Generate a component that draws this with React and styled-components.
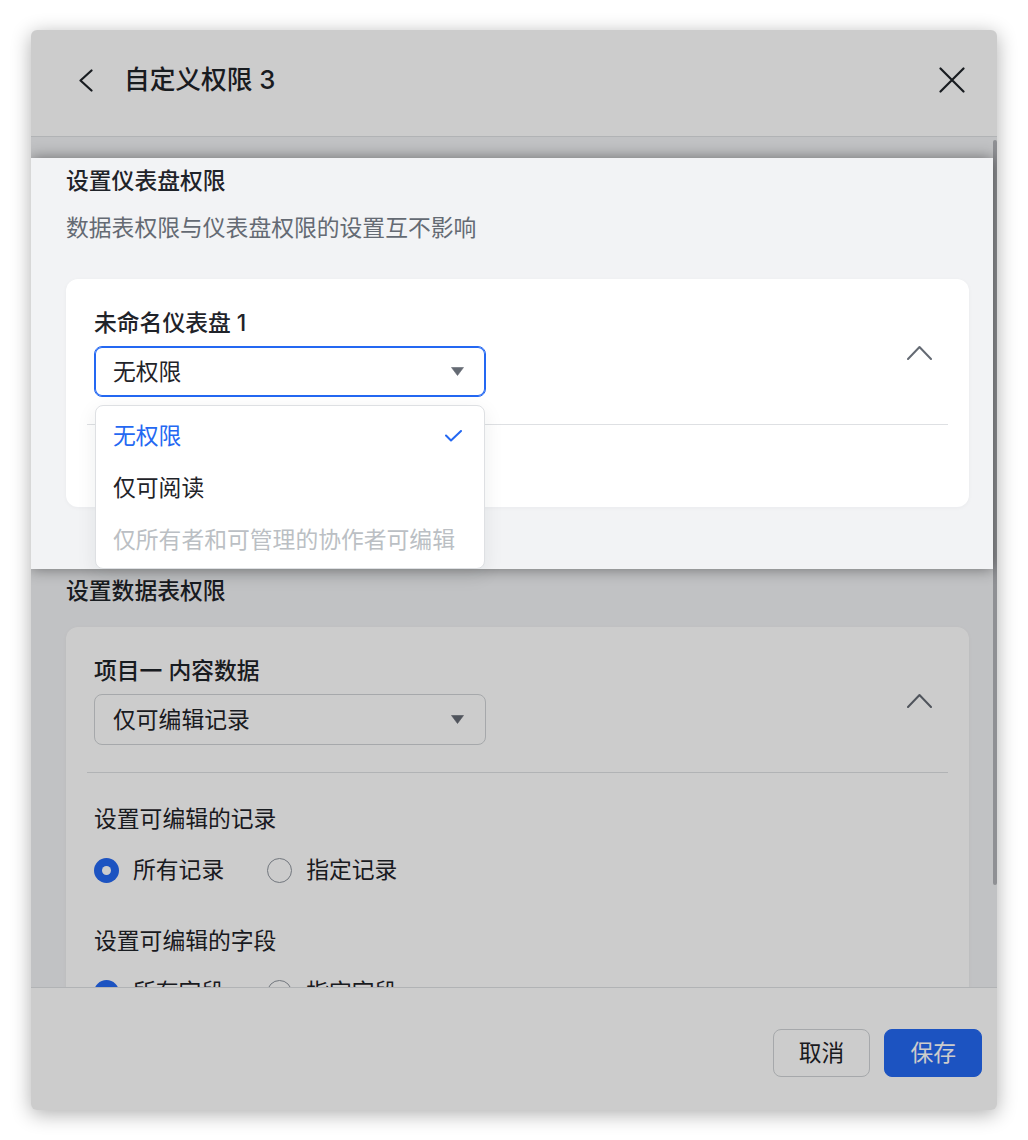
import React from "react";
import styled, { createGlobalStyle } from "styled-components";

const BLUE = "#2468f2";
const TEXT = "#1f2329";
const GRAY = "#646a73";
const LINE = "#dee0e3";

const GlobalStyle = createGlobalStyle`
  html, body { margin: 0; padding: 0; background: #ffffff; }
  body {
    font-family: "Inter", "Noto Sans CJK SC", sans-serif;
    color: ${TEXT};
    -webkit-font-smoothing: antialiased;
  }
  * { box-sizing: border-box; }
`;

const Page = styled.div`
  padding: 30px 0 30px 31px;
  min-height: 1140px;
`;

const Modal = styled.div`
  position: relative;
  width: 966px;
  height: 1080px;
  display: flex;
  flex-direction: column;
  background: #ffffff;
  border-radius: 6px;
  overflow: hidden;
  box-shadow: 0 4px 20px rgba(0, 0, 0, 0.32);
`;

const Mask = styled.div`
  position: absolute;
  inset: 0;
  background: rgba(0, 0, 0, 0.2);
  z-index: 10;
  pointer-events: none;
`;

const Header = styled.div`
  flex: none;
  height: 107px;
  display: flex;
  align-items: center;
  padding: 0 32px 6px 47px;
  border-bottom: 1px solid ${LINE};
`;

const IconButton = styled.button`
  display: flex;
  align-items: center;
  justify-content: center;
  padding: 0;
  border: none;
  background: transparent;
  cursor: pointer;
`;

const Title = styled.h1`
  flex: 1;
  margin: 0 0 0 31px;
  font-size: 25.7px;
  line-height: 36px;
  font-weight: 500;
  color: ${TEXT};
`;

const Body = styled.div`
  position: relative;
  flex: 1;
  overflow: hidden;
  background: #f2f3f5;
  padding: 21px 4px 0 0;
`;

const ScrollThumb = styled.div`
  position: absolute;
  top: 3px;
  right: 0;
  width: 4px;
  height: 745px;
  border-radius: 2px;
  background: #b3b5b9;
`;

const Section = styled.section`
  position: relative;
  z-index: ${(p) => (p.$spotlight ? 11 : "auto")};
  background: #f2f3f5;
  padding: ${(p) => (p.$spotlight ? "7px 24px 62px 35px" : "6px 24px 0 35px")};
  box-shadow: ${(p) => (p.$spotlight ? "0 0 14px rgba(0, 0, 0, 0.45)" : "none")};
`;

const SectionTitle = styled.h2`
  margin: 0;
  font-size: 22.8px;
  line-height: 32px;
  font-weight: 500;
  color: ${TEXT};
`;

const SectionDesc = styled.p`
  margin: 15px 0 0;
  font-size: 22.8px;
  line-height: 32px;
  color: ${GRAY};
`;

const Card = styled.div`
  margin-top: ${(p) => p.$gap}px;
  background: #ffffff;
  border-radius: 12px;
  box-shadow: 0 1px 4px rgba(31, 35, 41, 0.04);
`;

const CardHeader = styled.div`
  display: flex;
  align-items: center;
  justify-content: space-between;
  padding: 28px 37px 0 28px;
`;

const CardTitle = styled.div`
  font-size: 22.8px;
  line-height: 32px;
  font-weight: 500;
  color: ${TEXT};
`;

const Divider = styled.div`
  height: 1px;
  margin: 27px 21px 0;
  background: ${LINE};
`;

const CardBody = styled.div`
  padding: 30px 28px;
  min-height: ${(p) => p.$minHeight || 0}px;
`;

const SelectWrap = styled.div`
  position: relative;
  width: 392px;
  margin-top: 7px;
`;

const SelectBox = styled.div`
  display: flex;
  align-items: center;
  justify-content: space-between;
  height: 51px;
  padding: 0 21px 0 18px;
  border: 1px solid ${(p) => (p.$open ? BLUE : "#d0d3d6")};
  box-shadow: ${(p) => (p.$open ? `inset 0 0 0 1px ${BLUE}` : "none")};
  border-radius: 8px;
  background: #ffffff;
  font-size: 22.8px;
  line-height: 32px;
  color: ${TEXT};
`;

const Menu = styled.ul`
  position: absolute;
  top: calc(100% + 8px);
  left: 1px;
  width: 390px;
  margin: 0;
  padding: 4px 0 2px;
  list-style: none;
  background: #ffffff;
  border: 1px solid ${LINE};
  border-radius: 8px;
  box-shadow: 0 6px 20px rgba(31, 35, 41, 0.08);
  z-index: 1;
`;

const MenuItem = styled.li`
  display: flex;
  align-items: center;
  justify-content: space-between;
  height: 52px;
  padding: 0 22px 0 17px;
  font-size: 22.8px;
  line-height: 32px;
  color: ${(p) => (p.$selected ? BLUE : p.$disabled ? "#bbbfc4" : TEXT)};
`;

const FieldGroup = styled.div`
  margin-top: ${(p) => p.$gap || 0}px;
`;

const FieldLabel = styled.div`
  font-size: 22.8px;
  line-height: 32px;
  color: ${TEXT};
`;

const RadioRow = styled.div`
  display: flex;
  align-items: center;
  gap: 43px;
  margin-top: 19px;
`;

const RadioOption = styled.label`
  display: flex;
  align-items: center;
  gap: 14px;
  font-size: 22.8px;
  line-height: 32px;
  color: ${TEXT};
`;

const RadioDot = styled.span`
  position: relative;
  width: 25px;
  height: 25px;
  border-radius: 50%;
  border: ${(p) => (p.$checked ? `none` : "1.5px solid #8f959e")};
  background: ${(p) => (p.$checked ? BLUE : "#ffffff")};
  &::after {
    content: "";
    display: ${(p) => (p.$checked ? "block" : "none")};
    position: absolute;
    top: 50%;
    left: 50%;
    width: 9px;
    height: 9px;
    margin: -4.5px 0 0 -4.5px;
    border-radius: 50%;
    background: #ffffff;
  }
`;

const Footer = styled.div`
  flex: none;
  height: 123px;
  display: flex;
  justify-content: flex-end;
  align-items: flex-start;
  gap: 14px;
  padding: 41px 15px 0 0;
  border-top: 1px solid ${LINE};
`;

const Button = styled.button`
  height: 48px;
  padding: 0 25px;
  border-radius: 8px;
  font-family: inherit;
  font-size: 22.8px;
  line-height: 32px;
  border: 1px solid ${(p) => (p.$primary ? BLUE : "#d0d3d6")};
  background: ${(p) => (p.$primary ? BLUE : "#ffffff")};
  color: ${(p) => (p.$primary ? "#ffffff" : TEXT)};
`;

const BackIcon = () => (
  <svg width="15" height="23" viewBox="0 0 15 23" fill="none">
    <path d="M13.5 1.5 L2.5 11.5 L13.5 21.5" stroke={TEXT} strokeWidth="2.2" strokeLinecap="round" strokeLinejoin="round" />
  </svg>
);

const CloseIcon = () => (
  <svg width="26" height="26" viewBox="0 0 26 26" fill="none">
    <path d="M1.5 1.5 L24.5 24.5 M24.5 1.5 L1.5 24.5" stroke={TEXT} strokeWidth="2.2" strokeLinecap="round" />
  </svg>
);

const ChevronUp = () => (
  <svg width="25" height="15" viewBox="0 0 25 15" fill="none">
    <path d="M1 14 L12.5 2 L24 14" stroke={GRAY} strokeWidth="2" strokeLinecap="round" strokeLinejoin="round" />
  </svg>
);

const Caret = () => (
  <svg width="13" height="9" viewBox="0 0 13 9">
    <path d="M0.5 0.5 H12.5 L6.5 8.5 Z" fill={GRAY} stroke={GRAY} strokeWidth="0.6" strokeLinejoin="round" />
  </svg>
);

const Check = () => (
  <svg width="17" height="12" viewBox="0 0 17 12" fill="none">
    <path d="M1 5.5 L6 10.5 L16 1" stroke={BLUE} strokeWidth="2" strokeLinecap="round" strokeLinejoin="round" />
  </svg>
);

const Select = ({ value, open, options }) => (
  <SelectWrap>
    <SelectBox $open={open}>
      <span>{value}</span>
      <Caret />
    </SelectBox>
    {open && (
      <Menu>
        {options.map((o) => (
          <MenuItem key={o.label} $selected={o.label === value} $disabled={o.disabled}>
            <span>{o.label}</span>
            {o.label === value && <Check />}
          </MenuItem>
        ))}
      </Menu>
    )}
  </SelectWrap>
);

const Radio = ({ checked, label }) => (
  <RadioOption>
    <RadioDot $checked={checked} />
    <span>{label}</span>
  </RadioOption>
);

export default function App() {
  const dashOptions = [
    { label: "无权限" },
    { label: "仅可阅读" },
    { label: "仅所有者和可管理的协作者可编辑", disabled: true },
  ];
  return (
    <>
      <GlobalStyle />
      <Page>
        <Modal>
          <Header>
            <IconButton aria-label="返回">
              <BackIcon />
            </IconButton>
            <Title>自定义权限 3</Title>
            <IconButton aria-label="关闭">
              <CloseIcon />
            </IconButton>
          </Header>

          <Body>
            <Section $spotlight>
              <SectionTitle>设置仪表盘权限</SectionTitle>
              <SectionDesc>数据表权限与仪表盘权限的设置互不影响</SectionDesc>
              <Card $gap={35}>
                <CardHeader>
                  <div>
                    <CardTitle>未命名仪表盘 1</CardTitle>
                    <Select value="无权限" open options={dashOptions} />
                  </div>
                  <ChevronUp />
                </CardHeader>
                <Divider />
                <CardBody $minHeight={82} />
              </Card>
            </Section>

            <Section>
              <SectionTitle>设置数据表权限</SectionTitle>
              <Card $gap={20}>
                <CardHeader>
                  <div>
                    <CardTitle>项目一 内容数据</CardTitle>
                    <Select value="仅可编辑记录" />
                  </div>
                  <ChevronUp />
                </CardHeader>
                <Divider />
                <CardBody>
                  <FieldGroup>
                    <FieldLabel>设置可编辑的记录</FieldLabel>
                    <RadioRow>
                      <Radio checked label="所有记录" />
                      <Radio label="指定记录" />
                    </RadioRow>
                  </FieldGroup>
                  <FieldGroup $gap={39}>
                    <FieldLabel>设置可编辑的字段</FieldLabel>
                    <RadioRow>
                      <Radio checked label="所有字段" />
                      <Radio label="指定字段" />
                    </RadioRow>
                  </FieldGroup>
                </CardBody>
              </Card>
            </Section>
            <ScrollThumb />
          </Body>

          <Footer>
            <Button>取消</Button>
            <Button $primary>保存</Button>
          </Footer>
          <Mask />
        </Modal>
      </Page>
    </>
  );
}
